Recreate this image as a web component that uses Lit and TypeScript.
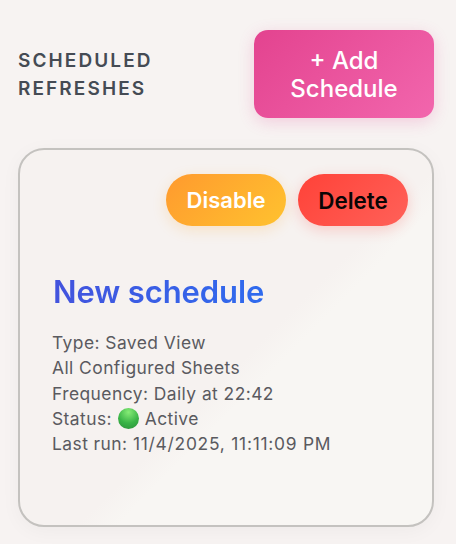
import { LitElement, html, css } from "lit";
import { customElement } from "lit/decorators.js";

@customElement("app-root")
export class AppRoot extends LitElement {
  static styles = css`
    :host {
      display: block;
      width: 456px;
      height: 544px;
      box-sizing: border-box;
      overflow: hidden;
      background: #f7f3f2;
      font-family: Inter, "Liberation Sans", sans-serif;
      padding: 30px 22px 0 18px;
    }
    .header {
      display: flex;
      justify-content: space-between;
      align-items: center;
      margin-bottom: 30px;
    }
    h2 {
      margin: 0;
      width: 170px;
      padding-top: 1px;
      font-size: 19px;
      line-height: 28px;
      font-weight: 600;
      letter-spacing: 2.1px;
      color: #454b54;
      text-transform: uppercase;
    }
    button {
      border: none;
      font-family: inherit;
      font-weight: 600;
      padding: 0;
    }
    .add {
      width: 180px;
      height: 88px;
      border-radius: 14px;
      background: linear-gradient(135deg, #e3438f, #f266ad);
      color: #fff;
      font-size: 24px;
      font-weight: 500;
      line-height: 28px;
      padding-top: 2px;
      box-shadow: 0 4px 16px rgba(228, 70, 146, 0.22);
    }
    .card {
      box-sizing: border-box;
      height: 379px;
      border: 2px solid #c4c2bf;
      border-radius: 26px;
      background: linear-gradient(135deg, #f6f2f0 0 55%, #f8f6f3 60% 100%);
      box-shadow: 0 4px 20px rgba(0, 0, 0, 0.04);
      padding: 24px 24px 0 32px;
    }
    .actions {
      display: flex;
      justify-content: flex-end;
      gap: 12px;
      margin-bottom: 47px;
    }
    .actions button {
      height: 52px;
      border-radius: 26px;
      font-size: 22.4px;
      font-weight: 600;
    }
    .actions .disable {
      width: 120px;
      font-size: 22px;
      color: #fff;
      background: linear-gradient(135deg, #ff9a2e, #ffc22f);
      box-shadow: 0 4px 14px rgba(255, 170, 50, 0.22);
    }
    .delete {
      width: 110px;
      color: #0a0505;
      background: linear-gradient(135deg, #ff4238, #ff6159);
      box-shadow: 0 4px 14px rgba(255, 70, 60, 0.22);
    }
    h3 {
      margin: 0 0 19px 1px;
      font-size: 31px;
      line-height: 38px;
      font-weight: 600;
      letter-spacing: -0.1px;
      color: #3b5ce4;
      background: linear-gradient(90deg, #4353dd, #2f6bee);
      -webkit-background-clip: text;
      background-clip: text;
      -webkit-text-fill-color: transparent;
      width: fit-content;
    }
    .meta {
      font-size: 17.4px;
      line-height: 25.25px;
      letter-spacing: 0.45px;
      color: #5a5a5f;
    }
    .date {
      letter-spacing: 0.75px;
    }
    .dot {
      display: inline-block;
      width: 21px;
      height: 21px;
      margin-left: 1px;
      border-radius: 50%;
      vertical-align: -4px;
      background: radial-gradient(circle at 50% 20%, #86ec76, #3ab447 55%, #2b8f3a);
    }
  `;

  render() {
    return html`
      <div class="header">
        <h2>Scheduled Refreshes</h2>
        <button class="add">+ Add<br />Schedule</button>
      </div>
      <div class="card">
        <div class="actions">
          <button class="disable">Disable</button>
          <button class="delete">Delete</button>
        </div>
        <h3>New schedule</h3>
        <div class="meta">
          <div>Type: Saved View</div>
          <div>All Configured Sheets</div>
          <div>Frequency: Daily at 22:42</div>
          <div>Status: <span class="dot"></span> Active</div>
          <div>Last run: <span class="date">11/4/2025, 11:11:09 PM</span></div>
        </div>
      </div>
    `;
  }
}
